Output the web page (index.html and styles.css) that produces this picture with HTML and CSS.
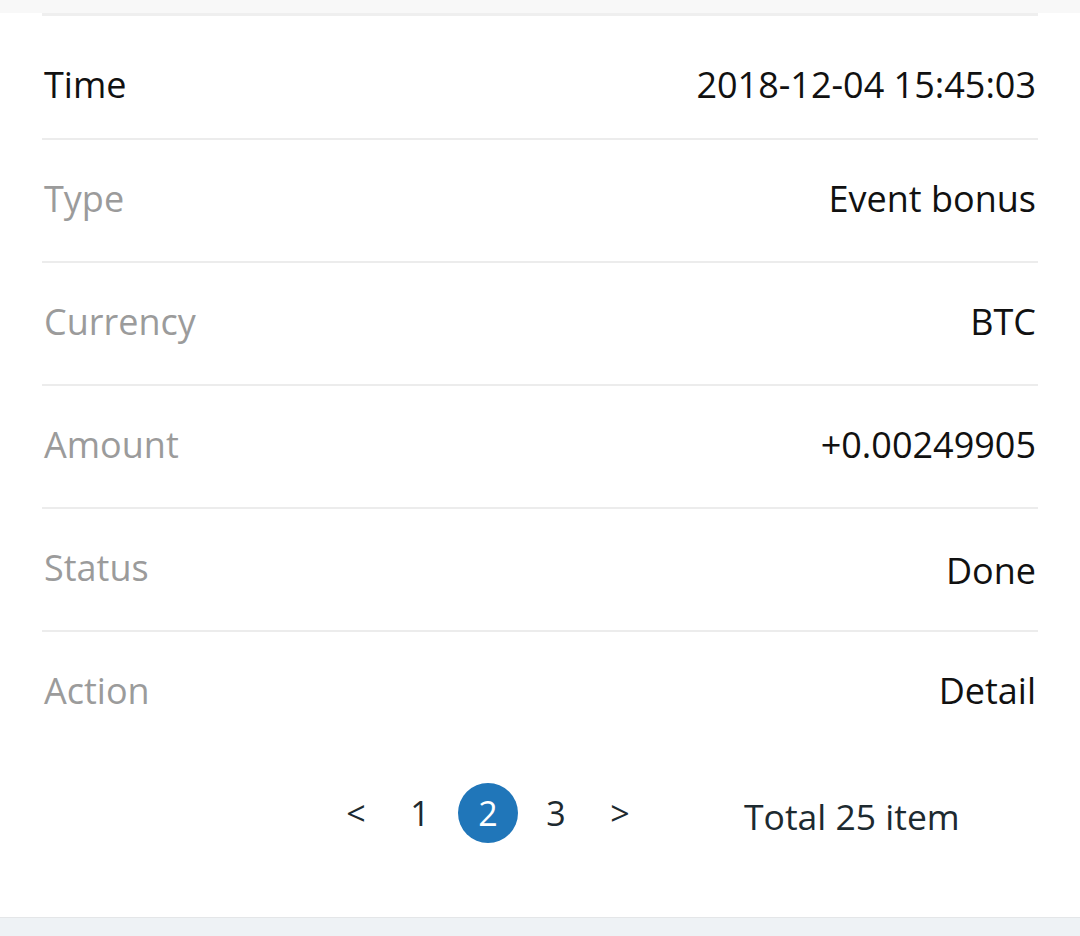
FILE: index.html
```html
<!DOCTYPE html>
<html>
<head>
<meta charset="utf-8">
<link rel="stylesheet" href="styles.css">
</head>
<body>
<div class="top-band"></div>
<div class="card">
  <div class="list">
    <div class="row first">
      <span class="label strong">Time</span>
      <span class="value">2018-12-04 15:45:03</span>
    </div>
    <div class="row">
      <span class="label">Type</span>
      <span class="value">Event bonus</span>
    </div>
    <div class="row">
      <span class="label">Currency</span>
      <span class="value">BTC</span>
    </div>
    <div class="row">
      <span class="label">Amount</span>
      <span class="value">+0.00249905</span>
    </div>
    <div class="row">
      <span class="label">Status</span>
      <span class="value low">Done</span>
    </div>
    <div class="row last">
      <span class="label">Action</span>
      <span class="value">Detail</span>
    </div>
  </div>
  <div class="pager">
    <span class="pg arrow prev">&lt;</span>
    <span class="pg">1</span>
    <span class="pg active">2</span>
    <span class="pg">3</span>
    <span class="pg arrow next">&gt;</span>
    <span class="total">Total 25 item</span>
  </div>
</div>
<div class="bottom-band"></div>
</body>
</html>
```
FILE: styles.css
```css
html, body {
  margin: 0;
  padding: 0;
}
body {
  background: #ffffff;
  font-family: "Open Sans", "Liberation Sans", sans-serif;
  width: 1080px;
  height: 936px;
  overflow: hidden;
}
.top-band {
  height: 13px;
  background: #f8f8f8;
}
.card {
  background: #ffffff;
  padding: 0 42px 44px 42px;
}
.list {
  border-top: 3px solid #efefef;
}
.row {
  display: flex;
  justify-content: space-between;
  align-items: center;
  height: 123px;
  box-sizing: border-box;
  border-bottom: 2px solid #ececec;
  font-size: 36px;
  padding: 0 2px 4px 2px;
}
.row.first {
  height: 124px;
  padding-top: 19px;
}
.row.last {
  border-bottom: none;
  height: 121px;
}
.label {
  color: #9b9b9b;
}
.label.strong {
  color: #111111;
}
.value {
  color: #111111;
}
.value.low {
  padding-top: 6px;
}
.pager {
  height: 120px;
  display: flex;
  align-items: center;
  padding-left: 284px;
  font-size: 34px;
  color: #1d2a30;
}
.pg {
  width: 60px;
  height: 60px;
  display: flex;
  align-items: center;
  justify-content: center;
  margin-right: 8px;
}
.pg.prev {
  margin-right: 4px;
}
.pg.arrow.next {
  margin-right: 0;
}
.pg:nth-child(4) {
  margin-right: 4px;
}
.pg.active {
  background: #2076b9;
  color: #ffffff;
  border-radius: 50%;
}
.total {
  margin-left: 94px;
  font-size: 35.5px;
  padding-top: 6px;
}
.bottom-band {
  height: 19px;
  background: #eef2f5;
  border-top: 1px solid #e4e6e8;
}
```
